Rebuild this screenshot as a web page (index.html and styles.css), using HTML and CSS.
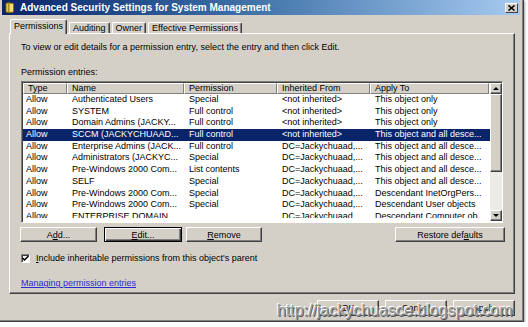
FILE: index.html
```html
<!DOCTYPE html>
<html lang="en">

<head>
    <meta charset="UTF-8">
    <title>Advanced Security Settings for System Management</title>
    <link rel="stylesheet" href="styles.css">
</head>

<body>
    <div class="window">
        <div class="titlebar">
            <svg class="title-icon" width="10" height="11" viewBox="0 0 10 11">
                <path d="M1 1.5 L4 0.5 L4 10.5 L1 10 Z" fill="#e8c34a" stroke="#8a6a10" stroke-width="0.8"/>
                <path d="M4 1 L8.5 1.5 L8.5 10 L4 10.5 Z" fill="#f7dc7a" stroke="#8a6a10" stroke-width="0.8"/>
            </svg>
            <span class="title">Advanced Security Settings for System Management</span>
            <span class="close-btn">
                <svg width="7" height="6" viewBox="0 0 7 6">
                    <path d="M0.5 0.5 L6.5 5.5 M6.5 0.5 L0.5 5.5" stroke="#000" stroke-width="1.6"/>
                </svg>
            </span>
        </div>

        <div class="tabs">
            <div class="tab active">Permissions</div>
            <div class="tab">Auditing</div>
            <div class="tab">Owner</div>
            <div class="tab">Effective Permissions</div>
        </div>

        <div class="panel">
            <p class="intro">To view or edit details for a permission entry, select the entry and then click Edit.</p>
            <div class="label">Permission entries:</div>

            <div class="listbox">
                <div class="list-main">
                    <div class="list-head">
                        <span>Type</span>
                        <span>Name</span>
                        <span>Permission</span>
                        <span>Inherited From</span>
                        <span>Apply To</span>
                    </div>
                    <div class="list-body">
                        <div class="row"><span>Allow</span><span>Authenticated Users</span><span>Special</span><span>&lt;not inherited&gt;</span><span>This object only</span></div>
                        <div class="row"><span>Allow</span><span>SYSTEM</span><span>Full control</span><span>&lt;not inherited&gt;</span><span>This object only</span></div>
                        <div class="row"><span>Allow</span><span>Domain Admins (JACKY...</span><span>Full control</span><span>&lt;not inherited&gt;</span><span>This object only</span></div>
                        <div class="row selected"><span>Allow</span><span>SCCM (JACKYCHUAAD...</span><span>Full control</span><span>&lt;not inherited&gt;</span><span>This object and all desce...</span></div>
                        <div class="row"><span>Allow</span><span>Enterprise Admins (JACK...</span><span>Full control</span><span>DC=Jackychuaad,...</span><span>This object and all desce...</span></div>
                        <div class="row"><span>Allow</span><span>Administrators (JACKYC...</span><span>Special</span><span>DC=Jackychuaad,...</span><span>This object and all desce...</span></div>
                        <div class="row"><span>Allow</span><span>Pre-Windows 2000 Com...</span><span>List contents</span><span>DC=Jackychuaad,...</span><span>This object and all desce...</span></div>
                        <div class="row"><span>Allow</span><span>SELF</span><span>Special</span><span>DC=Jackychuaad,...</span><span>This object and all desce...</span></div>
                        <div class="row"><span>Allow</span><span>Pre-Windows 2000 Com...</span><span>Special</span><span>DC=Jackychuaad,...</span><span>Descendant InetOrgPers...</span></div>
                        <div class="row"><span>Allow</span><span>Pre-Windows 2000 Com...</span><span>Special</span><span>DC=Jackychuaad,...</span><span>Descendant User objects</span></div>
                        <div class="row"><span>Allow</span><span>ENTERPRISE DOMAIN ...</span><span></span><span>DC=Jackychuaad,...</span><span>Descendant Computer ob...</span></div>
                    </div>
                </div>
                <div class="scrollbar">
                    <div class="sb-btn"><span class="arrow-up"></span></div>
                    <div class="sb-thumb"></div>
                    <div class="sb-track"></div>
                    <div class="sb-btn"><span class="arrow-down"></span></div>
                </div>
            </div>

            <div class="button-row">
                <button class="btn btn-add">A<u>d</u>d...</button>
                <button class="btn btn-edit default"><u>E</u>dit...</button>
                <button class="btn btn-remove"><u>R</u>emove</button>
                <button class="btn btn-restore">Restore def<u>a</u>ults</button>
            </div>

            <label class="check-row">
                <span class="checkbox">
                    <svg width="7" height="7" viewBox="0 0 7 7">
                        <path d="M0.5 3 L2.5 5 L6.5 1" fill="none" stroke="#000" stroke-width="1.5"/>
                    </svg>
                </span>
                <span><u>I</u>nclude inheritable permissions from this object's parent</span>
            </label>

            <a class="help-link" href="#">Managing permission entries</a>
        </div>

        <div class="footer">
            <button class="btn btn-footer">OK</button>
            <button class="btn btn-footer">Cancel</button>
            <button class="btn btn-footer">Apply</button>
        </div>

        <div class="watermark">http://jackychuasce.blogspot.com</div>
    </div>
</body>

</html>
```

FILE: styles.css
```css
/* base */
* {
    margin: 0;
    padding: 0;
    box-sizing: border-box;
}

body {
    background-color: #fff;
    font-family: "Liberation Sans", Arial, sans-serif;
    font-size: 9px;
    color: #000;
}

/* dialog frame */
.window {
    position: relative;
    width: 524px;
    height: 322px;
    padding-left: 2px;
    background-color: #d4d0c8;
    border-right: 1px solid #404040;
    border-bottom: 1px solid #404040;
    box-shadow: inset -1px -1px #808080, 1px 1px 2px rgba(0, 0, 0, 0.35);
}

.titlebar {
    display: flex;
    align-items: center;
    height: 15px;
    margin-right: 3px;
    padding-left: 3px;
    background: linear-gradient(to right, #0a246a, #3a6ea5 45%, #a6caf0);
}

.title-icon {
    flex-shrink: 0;
}

.title {
    margin-left: 5px;
    color: #fff;
    font-weight: bold;
    font-size: 10px;
    line-height: 15px;
    white-space: nowrap;
}

.close-btn {
    display: flex;
    align-items: center;
    justify-content: center;
    width: 13px;
    height: 10px;
    margin-left: auto;
    margin-right: 2px;
    background-color: #d4d0c8;
    border: 1px solid;
    border-color: #fff #404040 #404040 #fff;
}

/* tabs */
.tabs {
    display: flex;
    align-items: flex-end;
    height: 18px;
    padding-left: 8px;
}

.tab {
    height: 11px;
    padding: 0 3px;
    margin-right: 2px;
    line-height: 10px;
    border: 1px solid;
    border-bottom: none;
    border-color: #fff #404040 #404040 #fff;
    border-radius: 2px 2px 0 0;
    box-shadow: inset -1px 0 #808080;
    white-space: nowrap;
}

.tab.active {
    position: relative;
    z-index: 1;
    height: 15px;
    margin-bottom: -1px;
    padding: 0 3px;
    line-height: 12px;
    background-color: #d4d0c8;
}

/* panel */
.panel {
    width: 506px;
    height: 261px;
    margin-left: 7px;
    padding: 7px 10px 0 11px;
    border: 1px solid;
    border-color: #fff #404040 #404040 #fff;
    box-shadow: inset -1px -1px #808080;
}

.intro,
.label {
    line-height: 12px;
    white-space: nowrap;
}

.label {
    margin-top: 13px;
}

/* list view */
.listbox {
    display: flex;
    width: 482px;
    height: 142px;
    margin-top: 3px;
    background-color: #fff;
    border: 1px solid;
    border-color: #808080 #fff #fff #808080;
    box-shadow: inset 1px 1px #404040;
    padding: 1px 0 1px 1px;
}

.list-main {
    flex: 1;
    overflow: hidden;
}

.list-head,
.row {
    display: grid;
    grid-template-columns: 44px 117px 93px 93px 119px;
}

.list-head span {
    height: 11px;
    padding-left: 4px;
    line-height: 9px;
    background-color: #d4d0c8;
    border: 1px solid;
    border-color: #fff #808080 #808080 #fff;
    white-space: nowrap;
}

.list-body {
    height: 124px;
    overflow: hidden;
}

.row {
    height: 11.7px;
    line-height: 11.7px;
}

.row span {
    padding-left: 5px;
    white-space: nowrap;
    overflow: hidden;
}

.row span:first-child {
    padding-left: 3px;
}

.row.selected {
    background-color: #0a246a;
    color: #fff;
}

/* scrollbar */
.scrollbar {
    display: flex;
    flex-direction: column;
    width: 12px;
    background-color: #ecebe6;
}

.sb-btn,
.sb-thumb {
    background-color: #d4d0c8;
    border: 1px solid;
    border-color: #fff #404040 #404040 #fff;
    box-shadow: inset -1px -1px #808080;
}

.sb-btn {
    display: flex;
    align-items: center;
    justify-content: center;
    height: 11px;
}

.sb-thumb {
    height: 78px;
}

.sb-track {
    flex: 1;
}

.arrow-up,
.arrow-down {
    width: 0;
    height: 0;
    border-left: 3px solid transparent;
    border-right: 3px solid transparent;
}

.arrow-up {
    border-bottom: 3px solid #000;
}

.arrow-down {
    border-top: 3px solid #000;
}

/* buttons */
.btn {
    height: 15px;
    font-family: inherit;
    font-size: 9px;
    color: #000;
    background-color: #d4d0c8;
    border: 1px solid;
    border-color: #fff #404040 #404040 #fff;
    box-shadow: inset -1px -1px #808080;
}

.btn.default {
    border-color: #000;
    box-shadow: inset 1px 1px #fff, inset -1px -1px #404040, inset -2px -2px #808080;
}

.button-row {
    display: flex;
    margin-top: 4px;
    margin-left: -1px;
}

.btn-add {
    width: 77px;
}

.btn-edit {
    width: 78px;
    margin-left: 7px;
}

.btn-remove {
    width: 76px;
    margin-left: 4px;
}

.btn-restore {
    width: 110px;
    margin-left: auto;
    margin-right: -1px;
}

.check-row {
    display: flex;
    align-items: center;
    gap: 6px;
    margin-top: 10px;
    height: 12px;
}

.checkbox {
    display: flex;
    align-items: center;
    justify-content: center;
    width: 9px;
    height: 9px;
    background-color: #fff;
    border: 1px solid;
    border-color: #808080 #fff #fff #808080;
    box-shadow: inset 1px 1px #404040;
}

.help-link {
    display: inline-block;
    margin-top: 13px;
    line-height: 12px;
    color: #2a2ad0;
}

/* footer */
.footer {
    display: flex;
    justify-content: flex-end;
    gap: 6px;
    width: 506px;
    margin-left: 7px;
    margin-top: 6px;
}

.btn-footer {
    width: 62px;
    height: 16px;
}

.watermark {
    position: absolute;
    left: 277px;
    top: 303px;
    font-size: 16px;
    line-height: 16px;
    color: #9a9a9a;
    text-shadow: -1px -1px 0 #fff, 1px 1px 0 #5a5a5a;
    white-space: nowrap;
}
```
